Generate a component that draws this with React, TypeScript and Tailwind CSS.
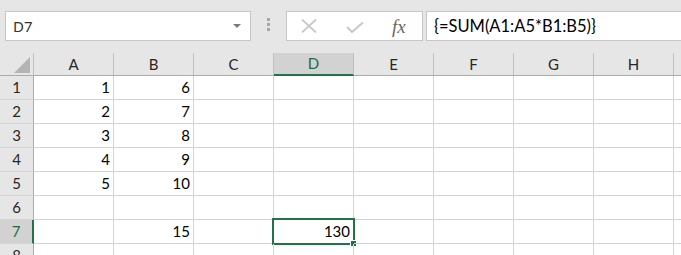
import React from "react";

const COLS = ["A", "B", "C", "D", "E", "F", "G", "H", "I"];
const DATA: Record<number, Record<string, string>> = {
  1: { A: "1", B: "6" },
  2: { A: "2", B: "7" },
  3: { A: "3", B: "8" },
  4: { A: "4", B: "9" },
  5: { A: "5", B: "10" },
  6: {},
  7: { B: "15", D: "130" },
  8: {},
};

const cellFont = { fontFamily: "Lato, 'Noto Sans', sans-serif" };

export default function App() {
  return (
    <div className="w-[681px] h-[255px] overflow-hidden bg-white text-black" style={cellFont}>
      {/* formula bar area */}
      <div className="h-[53px] bg-[#e6e6e6] flex items-start pt-[11px]">
        <div className="ml-[5px] w-[246px] h-[30px] border border-[#c6c6c6] bg-white flex items-center pl-[7px] pr-[9px] shrink-0">
          <span className="text-[15px] text-[#333] flex-1" style={{ fontFamily: "'Noto Sans', 'Open Sans', sans-serif" }}>
            D7
          </span>
          <svg width="8" height="4" viewBox="0 0 8 4">
            <path d="M0 0 L8 0 L4 4 Z" fill="#7a7a7a" />
          </svg>
        </div>
        <div className="ml-[16px] mt-[7px] flex flex-col gap-[2px] shrink-0">
          <div className="w-[3px] h-[3px] bg-[#a6a6a6]" />
          <div className="w-[3px] h-[3px] bg-[#a6a6a6]" />
          <div className="w-[3px] h-[3px] bg-[#a6a6a6]" />
        </div>
        <div className="ml-[16px] w-[137px] h-[30px] border border-[#c6c6c6] bg-white flex items-center shrink-0">
          <svg className="ml-[14px]" width="16" height="14" viewBox="0 0 16 14">
            <path d="M1 0.5 L15 13.5 M15 0.5 L1 13.5" stroke="#c8c8c8" strokeWidth="1.8" fill="none" />
          </svg>
          <svg className="ml-[29px] mt-[3px]" width="18" height="11" viewBox="0 0 18 11">
            <path d="M1 5 L6 10 L17 0.5" stroke="#c8c8c8" strokeWidth="2" fill="none" />
          </svg>
          <span
            className="ml-[28px] italic text-[19px] text-[#666666] leading-none"
            style={{ fontFamily: "'Liberation Serif', 'DejaVu Serif', serif" }}
          >
            fx
          </span>
        </div>
        <div className="ml-[3px] flex-1 h-[30px] border border-[#c6c6c6] border-r-0 bg-white flex items-center pl-[7px]">
          <span className="text-[16.5px] text-black">{"{=SUM(A1:A5*B1:B5)}"}</span>
        </div>
      </div>

      {/* column headers */}
      <div className="flex h-[23px] bg-[#e6e6e6]">
        <div className="w-[34px] shrink-0 border-r border-[#c0c0c0] border-b border-b-[#ababab] relative flex items-end justify-end pr-[3px] pb-[2px]">
          <svg width="16" height="16" viewBox="0 0 16 16">
            <path d="M16 0 L16 16 L0 16 Z" fill="#b4b4b4" />
          </svg>
        </div>
        {COLS.map((c) => {
          const sel = c === "D";
          return (
            <div
              key={c}
              className={
                "w-[80px] shrink-0 flex items-center justify-center text-[15px] border-r border-[#c0c0c0] " +
                (sel
                  ? "bg-[#d2d2d2] border-b-2 border-b-[#217346] text-[#1e6b41]"
                  : "border-b border-b-[#ababab] text-[#262626]")
              }
            >
              {c === "I" ? "" : c}
            </div>
          );
        })}
      </div>

      {/* rows */}
      {[1, 2, 3, 4, 5, 6, 7, 8].map((r) => {
        const selRow = r === 7;
        return (
          <div key={r} className="flex h-[24px]">
            <div
              className={
                "w-[34px] shrink-0 flex items-center justify-center text-[15px] border-b border-[#d4d4d4] " +
                (selRow
                  ? "bg-[#d2d2d2] border-r-2 border-r-[#217346] text-[#1e6b41]"
                  : "bg-[#e6e6e6] border-r border-r-[#ababab] text-[#262626]")
              }
            >
              {r}
            </div>
            {COLS.map((c) => {
              const v = DATA[r][c];
              const sel = r === 7 && c === "D";
              return (
                <div
                  key={c}
                  className="w-[80px] shrink-0 border-r border-b border-[#d4d4d4] flex items-center justify-end pr-[3px] text-[15px] relative"
                >
                  {v}
                  {sel && (
                    <div className="absolute left-[-2px] top-[-2px] w-[83px] h-[27px] border-2 border-[#217346]">
                      <div className="absolute right-[-4px] bottom-[-4px] w-[7px] h-[7px] bg-[#217346] border border-white" />
                    </div>
                  )}
                </div>
              );
            })}
          </div>
        );
      })}
    </div>
  );
}
